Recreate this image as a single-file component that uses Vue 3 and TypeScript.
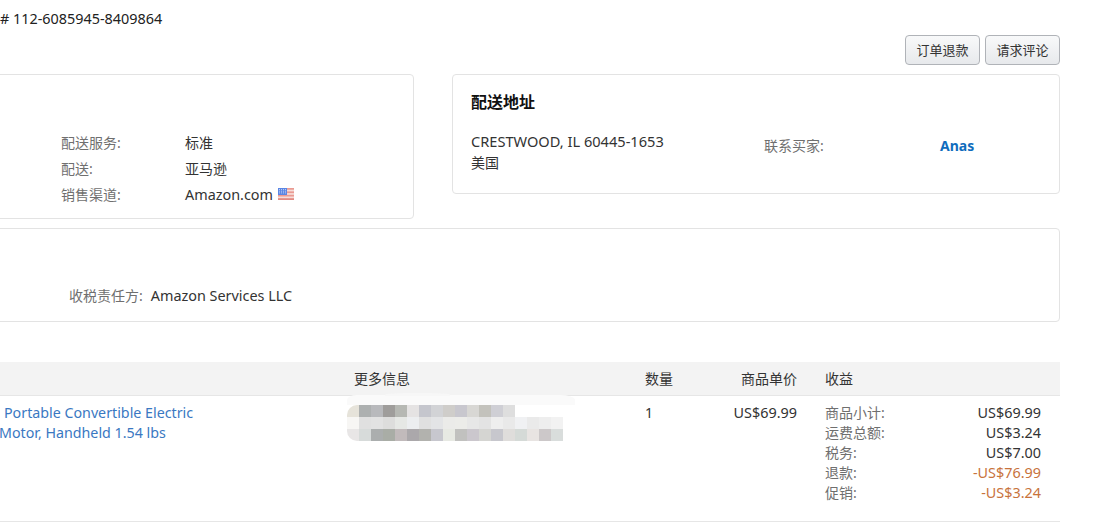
<script setup lang="ts">
const shippingRows = [
  { label: '配送服务:', value: '标准' },
  { label: '配送:', value: '亚马逊' },
  { label: '销售渠道:', value: 'Amazon.com', flag: true },
]

const revenueRows = [
  { label: '商品小计:', value: 'US$69.99' },
  { label: '运费总额:', value: 'US$3.24' },
  { label: '税务:', value: 'US$7.00' },
  { label: '退款:', value: '-US$76.99', negative: true },
  { label: '促销:', value: '-US$3.24', negative: true },
]

// mosaic over the redacted product details
const mosaicRows = [
  ['e6e3da', 'adb0b0', 'b8b9bc', '9f9d9b', 'b6b8b3', 'e5e3e3', 'c5c6cd', 'd2d3d6', 'cfcdca', 'c8c7ce', 'd8d7d4', 'c3c2bc', 'cfcfd5', 'dedede'],
  ['f7f6f4', 'e0e0e0', 'e2e2e2', 'dddddc', 'e6e8e5', 'eceef0', 'e0e0e0', 'e3e4e6', 'ebebe9', 'ecece9', 'e7e7e7', 'e3e3e3', 'eeeeee', 'e9e9e9', 'f0f1f3', 'eaeaea', 'eeeeee', 'f2f2f2'],
  ['e8e6e6', 'd7dbda', 'abaeae', 'a9ada6', 'c1babb', 'aba8ab', 'b2b2ae', 'c7c7ce', 'e7e9e3', 'c1c1bf', 'cbc7cd', 'd5d5d2', 'c7c7cd', 'dfdddb', 'd5dad7', 'e8e4e2', 'ccc8c9', 'd9dddc'],
]
</script>

<template>
  <div class="page">
    <div class="order-id"># 112-6085945-8409864</div>

    <div class="actions">
      <button class="btn">订单退款</button>
      <button class="btn">请求评论</button>
    </div>

    <div class="cards">
      <section class="card shipping">
        <div class="ship-row" v-for="row in shippingRows" :key="row.label">
          <span class="label">{{ row.label }}</span>
          <span class="value" :class="{ latin: row.flag }">
            {{ row.value }}
            <svg v-if="row.flag" class="flag" width="16" height="12" viewBox="0 0 16 12">
              <rect width="16" height="12" fill="#f6dcd8" />
              <rect y="0" width="16" height="1.7" fill="#ea9a92" />
              <rect y="3.4" width="16" height="1.7" fill="#ea9a92" />
              <rect y="6.8" width="16" height="1.7" fill="#ea9a92" />
              <rect y="10.2" width="16" height="1.8" fill="#e28a82" />
              <rect width="9" height="7" fill="#5a86e4" />
              <path d="M1 1.5h7M1 3.2h7M1 4.9h7" stroke="#cfdcf8" stroke-width="0.8" stroke-dasharray="1 1" />
            </svg>
          </span>
        </div>
      </section>

      <section class="card address">
        <h2 class="card-title">配送地址</h2>
        <div class="address-body">
          <div class="address-text">
            <div class="address-line">CRESTWOOD, IL 60445-1653</div>
            <div>美国</div>
          </div>
          <div class="contact">
            <span class="label contact-label">联系买家:</span>
            <a class="buyer">Anas</a>
          </div>
        </div>
      </section>
    </div>

    <section class="card tax">
      <span class="label">收税责任方:</span>
      <span class="value latin">Amazon Services LLC</span>
    </section>

    <div class="table">
      <div class="thead">
        <div></div>
        <div class="th-info">更多信息</div>
        <div>数量</div>
        <div class="right">商品单价</div>
        <div class="th-revenue">收益</div>
      </div>
      <div class="tbody">
        <div class="product">
          <a class="line-one">Portable Convertible Electric</a>
          <a class="line-two">Motor, Handheld 1.54 lbs</a>
        </div>
        <div class="info">
          <div class="smudge"></div>
          <div class="mosaic">
            <div class="mosaic-row" v-for="(cells, r) in mosaicRows" :key="r">
              <i v-for="(c, i) in cells" :key="i" :style="{ background: '#' + c }"></i>
            </div>
          </div>
        </div>
        <div class="qty">1</div>
        <div class="right latin">US$69.99</div>
        <div class="revenue">
          <div class="rev-row" v-for="row in revenueRows" :key="row.label">
            <span class="label">{{ row.label }}</span>
            <span class="latin" :class="{ negative: row.negative }">{{ row.value }}</span>
          </div>
        </div>
      </div>
    </div>
  </div>
</template>

<style scoped>
.page {
  width: 1160px;
  margin-left: -100px;
  color: #333;
  font-family: "Noto Sans", "Noto Sans CJK SC", sans-serif;
  font-size: 14px;
  line-height: 20px;
}

.latin {
  font-size: 14.4px;
}

.order-id {
  height: 35px;
  padding: 9px 0 0 100px;
  box-sizing: border-box;
  font-size: 14.4px;
  line-height: 19px;
  color: #222;
}

.actions {
  display: flex;
  justify-content: flex-end;
  gap: 5px;
  height: 30px;
}

.btn {
  width: 75px;
  height: 30px;
  padding: 0;
  background: linear-gradient(#f8f9fa, #e7e9ec);
  border: 1px solid #b0b3b8;
  border-radius: 4px;
  color: #333;
  font: inherit;
  font-size: 13px;
}

.cards {
  display: grid;
  grid-template-columns: 514px 608px;
  gap: 38px;
  align-items: start;
  margin-top: 9px;
}

.card {
  box-sizing: border-box;
  background: #fff;
  border: 1px solid #e3e3e3;
  border-radius: 4px;
}

.shipping {
  height: 145px;
  padding: 55px 0 0 160px;
}

.ship-row {
  display: grid;
  grid-template-columns: 124px 1fr;
  height: 26px;
  line-height: 26px;
}

.label {
  color: #6f6f6f;
}

.value {
  color: #333;
}

.flag {
  margin-left: 1px;
  vertical-align: 0;
}

.address {
  height: 120px;
  padding: 15px 18px 0;
}

.card-title {
  margin: 0 0 17px;
  font-size: 16px;
  font-weight: 700;
  line-height: 24px;
  color: #111;
}

.address-body {
  display: flex;
}

.address-text {
  width: 293px;
  line-height: 21px;
}

.address-line {
  font-size: 14.6px;
}

.contact {
  display: flex;
  margin-top: 4px;
  line-height: 21px;
}

.contact-label {
  width: 176px;
}

.buyer {
  color: #0f6cbd;
  font-weight: 700;
}

.tax {
  display: flex;
  gap: 8px;
  height: 94px;
  margin-top: 9px;
  padding: 57px 0 0 168px;
}

.table {
  margin-top: 40px;
}

.thead,
.tbody {
  display: grid;
  grid-template-columns: 447px 298px 80px 72px 263px;
}

.thead {
  height: 34px;
  box-sizing: border-box;
  align-items: center;
  background: #f3f3f3;
  border-bottom: 1px solid #e6e6e6;
  color: #333;
}

.th-info {
  padding-left: 7px;
}

.th-revenue {
  padding-left: 28px;
}

.right {
  text-align: right;
}

.tbody {
  height: 126px;
  box-sizing: border-box;
  padding-top: 7px;
  border-bottom: 1px solid #e6e6e6;
}

.product {
  display: flex;
  flex-direction: column;
  padding-left: 100px;
  font-size: 14.25px;
  color: #3a78c2;
}

.line-one {
  padding-left: 4px;
}

.line-two {
  margin-left: -1px;
}

.info {
  position: relative;
}

/* faint retouch left around the mosaic */
.smudge {
  position: absolute;
  left: 0;
  top: -8px;
  width: 228px;
  height: 10px;
  background: #fafafa;
  border-radius: 20px 30px 0 0 / 10px;
}

.smudge::before {
  content: "";
  position: absolute;
  left: 38px;
  top: -2px;
  width: 65px;
  height: 3px;
  background: #f7f7f7;
  border-radius: 50% 50% 0 0;
}

.mosaic {
  position: relative;
  width: 216px;
  margin-top: 2px;
  overflow: hidden;
  border-radius: 10px 0 0 10px;
}

.mosaic-row {
  display: flex;
  height: 12px;
}

.mosaic-row i {
  display: block;
  width: 12px;
  height: 12px;
}

.revenue {
  padding: 0 19px 0 28px;
}

.rev-row {
  display: flex;
  justify-content: space-between;
}

.negative {
  color: #c8733c;
}
</style>

<style>
html,
body {
  margin: 0;
  overflow: hidden;
  background: #fff;
}
</style>
